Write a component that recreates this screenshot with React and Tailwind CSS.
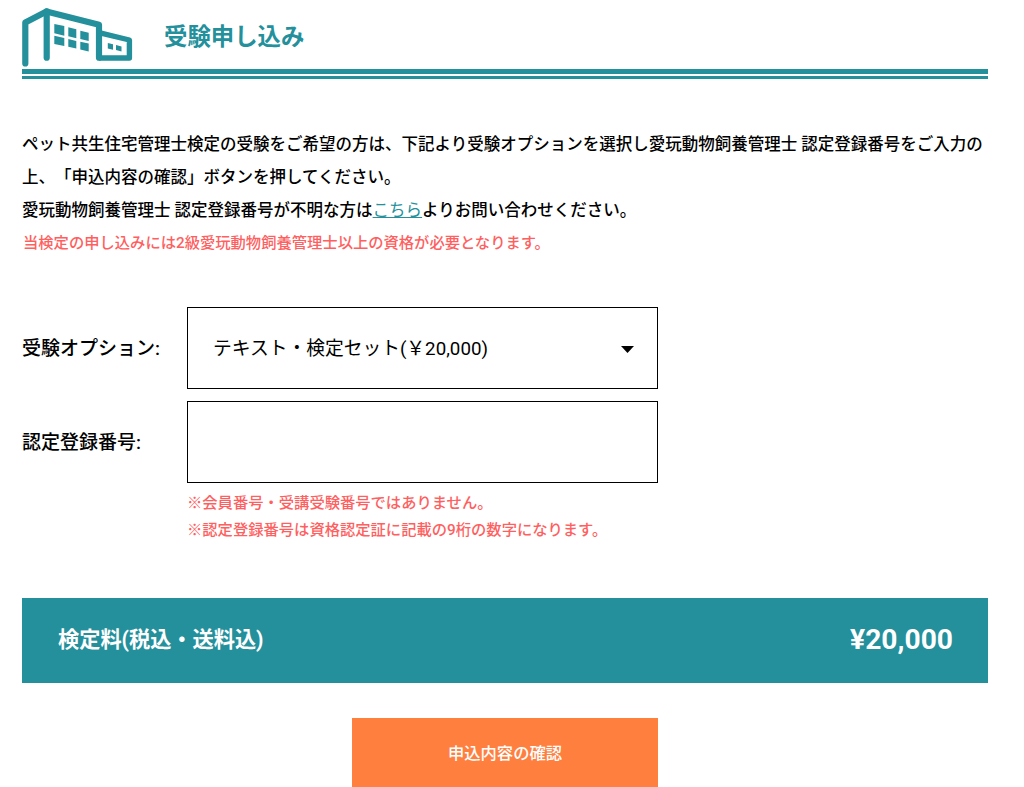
import React from 'react';

const font = "font-['Roboto','Noto_Sans_CJK_JP',sans-serif]";

const Logo = () => (
    <svg width="111" height="60" viewBox="0 0 111 60" fill="none">
        <g stroke="#23909b" strokeWidth="6.2" strokeLinecap="round" strokeLinejoin="round">
            <path d="M3.3 55.5V14.5L24.5 3.4L77 16.8V49.7" />
            <path d="M24.7 3.4V49.7" />
        </g>
        <path d="M78 24.8L107.4 32V50H77" stroke="#23909b" strokeWidth="5.4" strokeLinejoin="round" />
        <g fill="#23909b">
            <path d="M32.3 16L42.3 18V27.7L32.3 25.3Z" />
            <path d="M46.3 19.3L54.3 21.3V30.2L46.3 28.2Z" />
            <path d="M58.3 22.7L66.7 24.7V33L58.3 31Z" />
            <path d="M32.3 27.7L42.3 30V38L32.3 36Z" />
            <path d="M46.3 31L54.3 32.9V40.6L46.3 38.7Z" />
            <path d="M58.3 33.7L66.7 35.5V43.6L58.3 41.6Z" />
            <path d="M85.8 35L91 36.3V41.7L85.8 40.4Z" />
            <path d="M94 37L99.5 38.4V43.4L94 42Z" />
        </g>
    </svg>
);

const App = () => {
    return (
        <div className={`${font} w-[1024px] h-[787px] overflow-hidden bg-white text-black pl-[22px] pr-[36px] pt-2`}>
            <div className="flex items-start h-[61px]">
                <Logo />
                <h1 className="ml-[31px] mt-[11px] text-[23.4px] leading-[36px] font-bold text-[#23909b]">受験申し込み</h1>
            </div>
            <div className="h-[5px] bg-[#23909b]" />
            <div className="h-[2.5px] mt-[2px] bg-[#23909b]" />

            <div className="mt-[49px] text-[16.5px] font-medium leading-[33px] [text-spacing-trim:space-all]">
                <p>ペット共生住宅管理士検定の受験をご希望の方は、下記より受験オプションを選択し愛玩動物飼養管理士 認定登録番号をご入力の上、「申込内容の確認」ボタンを押してください。</p>
                <p>愛玩動物飼養管理士 認定登録番号が不明な方は<a href="#" className="text-[#23909b] font-normal underline">こちら</a>よりお問い合わせください。</p>
                <p className="text-[15.3px] pl-px text-[#ff5f5f]">当検定の申し込みには2級愛玩動物飼養管理士以上の資格が必要となります。</p>
            </div>

            <div className="mt-[47px] flex items-center">
                <label className="w-[165px] pt-[4px] text-[19px] font-medium">受験オプション:</label>
                <div className="w-[471px] h-[82px] border border-black flex items-center justify-between pt-[4px] pl-[25px] pr-[23px] text-[18.75px]">
                    <span>テキスト・検定セット(￥20,000)</span>
                    <svg width="13" height="7" viewBox="0 0 13 7"><path d="M0 0H13L6.5 7Z" fill="#000" /></svg>
                </div>
            </div>
            <div className="mt-[12px] flex items-center">
                <label className="w-[165px] pt-[4px] text-[19px] font-medium">認定登録番号:</label>
                <input className="w-[471px] h-[82px] border border-black" />
            </div>
            <div className="ml-[165px] mt-[7px] text-[15.3px] font-medium leading-[27px] text-[#ff5f5f]">
                <p>※会員番号・受講受験番号ではありません。</p>
                <p>※認定登録番号は資格認定証に記載の9桁の数字になります。</p>
            </div>

            <div className="mt-[54px] h-[85px] bg-[#23909b] flex items-center justify-between pl-[36px] pr-[35px] text-white font-bold">
                <span className="text-[21.2px]">検定料(税込・送料込)</span>
                <span className="text-[28.2px]">¥20,000</span>
            </div>

            <div className="mt-[35px] flex justify-center">
                <button className="w-[306px] h-[69px] pt-[4px] bg-[#ff7f3f] text-white text-[16.3px] font-medium">申込内容の確認</button>
            </div>
        </div>
    );
};

export default App;
